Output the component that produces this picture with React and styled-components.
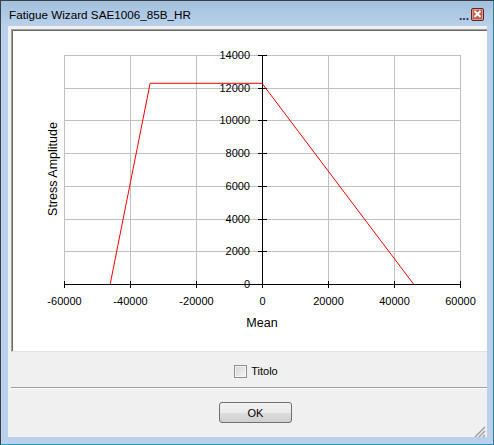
import React from "react";
import styled, { createGlobalStyle } from "styled-components";

const GlobalStyle = createGlobalStyle`
  html, body { margin: 0; padding: 0; background: #ffffff; }
  body { font-family: "Liberation Sans", Arial, sans-serif; }
`;

// chart mapping in page pixels
const X0 = 262;
const XS = 66 / 20000;
const Y0 = 284;
const YS = 229 / 14000;
const px = (v) => X0 + v * XS;
const py = (v) => Y0 - v * YS;

const xTicks = [-60000, -40000, -20000, 0, 20000, 40000, 60000];
const yTicks = [0, 2000, 4000, 6000, 8000, 10000, 12000, 14000];

const curve = [
  [-46000, 0],
  [-33900, 12270],
  [0, 12270],
  [45900, 0],
];

const App = () => {
  return (
    <>
      <GlobalStyle />
      <Window>
        <TitleBar>
          <TitleText>Fatigue Wizard SAE1006_85B_HR</TitleText>
          <TitleDots>...</TitleDots>
          <CloseButton>
            <svg width="9" height="8" viewBox="0 0 9 8">
              <path d="M1.5 1 L7.5 7 M7.5 1 L1.5 7" stroke="#ffffff" strokeWidth="2" />
            </svg>
          </CloseButton>
        </TitleBar>
        <Client>
          <ChartPanel>
            <svg width="473" height="320" viewBox="13 31 473 320" shapeRendering="crispEdges">
              {xTicks.map((t) => (
                <line key={"gx" + t} x1={px(t) + 0.5} x2={px(t) + 0.5} y1={py(14000)} y2={Y0} stroke="#c0c0c0" />
              ))}
              {yTicks.map((t) => (
                <line key={"gy" + t} x1={px(-60000)} x2={px(60000) + 1} y1={Math.round(py(t)) + 0.5} y2={Math.round(py(t)) + 0.5} stroke="#c0c0c0" />
              ))}
              <line x1={X0 + 0.5} x2={X0 + 0.5} y1={py(14000)} y2={Y0 + 1} stroke="#000" />
              <line x1={px(-60000)} x2={px(60000) + 1} y1={Y0 + 0.5} y2={Y0 + 0.5} stroke="#000" />
              {yTicks.map((t) => (
                <line key={"ty" + t} x1={X0 - 4} x2={X0 + 5} y1={Math.round(py(t)) + 0.5} y2={Math.round(py(t)) + 0.5} stroke="#000" />
              ))}
              {xTicks.map((t) => (
                <line key={"tx" + t} x1={px(t) + 0.5} x2={px(t) + 0.5} y1={Y0 - 3} y2={Y0 + 4} stroke="#000" />
              ))}
              <polyline
                points={curve.map(([a, b]) => `${px(a)},${py(b)}`).join(" ")}
                fill="none"
                stroke="#ff0000"
                strokeWidth="1"
                shapeRendering="auto"
              />
              {yTicks.map((t) => (
                <text key={"ly" + t} x={250} y={py(t) + 4} textAnchor="end" fontSize="11" fontFamily="Liberation Sans, Arial, sans-serif" fill="#000">
                  {t}
                </text>
              ))}
              {xTicks.map((t) => (
                <text key={"lx" + t} x={px(t) + 0.5} y={305} textAnchor="middle" fontSize="11" fontFamily="Liberation Sans, Arial, sans-serif" fill="#000">
                  {t}
                </text>
              ))}
              <text x={262} y={327} textAnchor="middle" fontSize="12.5" fontFamily="Liberation Sans, Arial, sans-serif" fill="#000">
                Mean
              </text>
              <text x={57} y={169} transform="rotate(-90 57 169)" textAnchor="middle" fontSize="12.5" fontFamily="Liberation Sans, Arial, sans-serif" fill="#000">
                Stress Amplitude
              </text>
            </svg>
          </ChartPanel>
          <CheckRow>
            <CheckBox />
            <CheckLabel>Titolo</CheckLabel>
          </CheckRow>
          <Separator />
          <ButtonRow>
            <OkButton>OK</OkButton>
          </ButtonRow>
          <Grip>
            <svg width="12" height="12" viewBox="0 0 12 12">
              <path d="M11 1 L1 11 M11 5 L5 11 M11 9 L9 11" stroke="#a0a0a0" strokeWidth="1.5" />
            </svg>
          </Grip>
        </Client>
      </Window>
    </>
  );
};

export default App;

const Window = styled.div`
  width: 494px;
  height: 445px;
  box-sizing: border-box;
  border: 1px solid #3a3f45;
  border-right-color: #2a7f95;
  border-bottom-color: #2a95b0;
  background: #b9d1ea;
  padding: 0 6px 7px 7px;
  display: flex;
  flex-direction: column;
`;

const TitleBar = styled.div`
  height: 25px;
  margin: 0 -6px 0 -7px;
  padding: 0 9px 0 8px;
  background: linear-gradient(#a3c0de, #b9d1ea);
  display: flex;
  align-items: center;
`;

const TitleText = styled.div`
  flex: 1;
  font-family: "Liberation Sans", Arial, sans-serif;
  font-size: 11.7px;
  color: #000000;
  padding-top: 1px;
`;

const TitleDots = styled.div`
  font-family: "Liberation Sans", Arial, sans-serif;
  font-size: 12px;
  font-weight: bold;
  color: #1e2a5a;
  margin-right: 2px;
  padding-top: 4px;
`;

const CloseButton = styled.div`
  width: 11px;
  height: 11px;
  flex: none;
  margin-top: 1px;
  border: 1px solid #5e2620;
  border-radius: 2px;
  background: #c4584a;
  box-shadow: inset 0 0 0 1px #e09a8e;
  display: flex;
  align-items: center;
  justify-content: center;
`;

const Client = styled.div`
  position: relative;
  flex: 1;
  background: #f0f0f0;
  padding: 3px 0 0 3px;
  display: flex;
  flex-direction: column;
`;

const ChartPanel = styled.div`
  height: 323px;
  box-sizing: border-box;
  background: #ffffff;
  border-top: 1px solid #a0a0a0;
  border-left: 1px solid #a0a0a0;
  border-bottom: 1px solid #e3e3e3;
  box-shadow: inset 1px 1px 0 #696969;
  padding: 1px 0 0 1px;
  overflow: hidden;
  svg {
    display: block;
  }
`;

const CheckRow = styled.div`
  height: 35px;
  padding: 3px 0 0 14px;
  box-sizing: border-box;
  display: flex;
  align-items: center;
  justify-content: center;
  gap: 4px;
`;

const CheckBox = styled.div`
  width: 11px;
  height: 11px;
  border: 1px solid #8e8f8f;
  background: linear-gradient(135deg, #d4d4d4, #f6f6f6);
  box-shadow: inset 0 0 0 1px #f4f4f4;
`;

const CheckLabel = styled.span`
  font-family: "Liberation Sans", Arial, sans-serif;
  font-size: 11px;
  color: #000000;
`;

const Separator = styled.div`
  height: 1px;
  background: #a0a0a0;
  border-bottom: 1px solid #ffffff;
`;

const ButtonRow = styled.div`
  flex: 1;
  display: flex;
  justify-content: center;
  padding: 13px 0 0 13px;
`;

const OkButton = styled.button`
  width: 73px;
  height: 21px;
  border: 1px solid #707070;
  border-radius: 3px;
  background: linear-gradient(#f2f2f2 0%, #ebebeb 50%, #dddddd 51%, #cfcfcf 100%);
  font-family: "Liberation Sans", Arial, sans-serif;
  font-size: 11px;
  color: #000000;
  padding: 0;
`;

const Grip = styled.div`
  position: absolute;
  right: 1px;
  bottom: 1px;
  width: 12px;
  height: 12px;
`;
